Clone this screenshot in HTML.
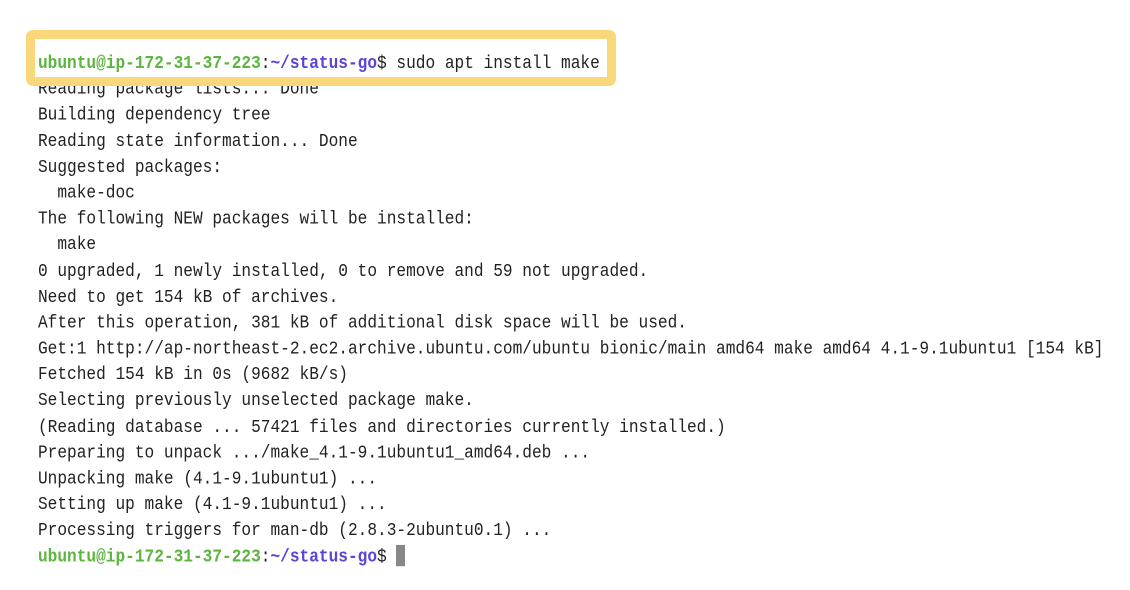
<!DOCTYPE html>
<html><head><meta charset="utf-8"><style>
html,body{margin:0;padding:0;background:#fff;width:1130px;height:590px;overflow:hidden}
.t,.l1{position:absolute;left:38px;top:50.5px;font-family:"Liberation Mono",monospace;font-size:16.15px;line-height:23.18px;color:#222;white-space:pre;transform:scaleY(1.12);transform-origin:0 0}
.g{color:#5bb53f;font-weight:bold}.b{color:#5b45d6;font-weight:bold}
.box{position:absolute;left:26px;top:30px;width:572px;height:38px;border:9.5px solid #f9d77a;border-radius:7px}
.cover{position:absolute;left:35px;top:40px;width:572px;height:37px;background:#fff}
.cur{display:inline-block;width:9px;height:19px;background:#888;vertical-align:-4px}
</style></head><body>
<div class="t">
Reading package lists... Done
Building dependency tree
Reading state information... Done
Suggested packages:
  make-doc
The following NEW packages will be installed:
  make
0 upgraded, 1 newly installed, 0 to remove and 59 not upgraded.
Need to get 154 kB of archives.
After this operation, 381 kB of additional disk space will be used.
Get:1 http://ap-northeast-2.ec2.archive.ubuntu.com/ubuntu bionic/main amd64 make amd64 4.1-9.1ubuntu1 [154 kB]
Fetched 154 kB in 0s (9682 kB/s)
Selecting previously unselected package make.
(Reading database ... 57421 files and directories currently installed.)
Preparing to unpack .../make_4.1-9.1ubuntu1_amd64.deb ...
Unpacking make (4.1-9.1ubuntu1) ...
Setting up make (4.1-9.1ubuntu1) ...
Processing triggers for man-db (2.8.3-2ubuntu0.1) ...
<span class="g">ubuntu@ip-172-31-37-223</span>:<span class="b">~/status-go</span>$ <span class="cur"></span></div>
<div class="cover"></div>
<div class="box"></div>
<div class="l1"><span class="g">ubuntu@ip-172-31-37-223</span>:<span class="b">~/status-go</span>$ sudo apt install make</div>
</body></html>
